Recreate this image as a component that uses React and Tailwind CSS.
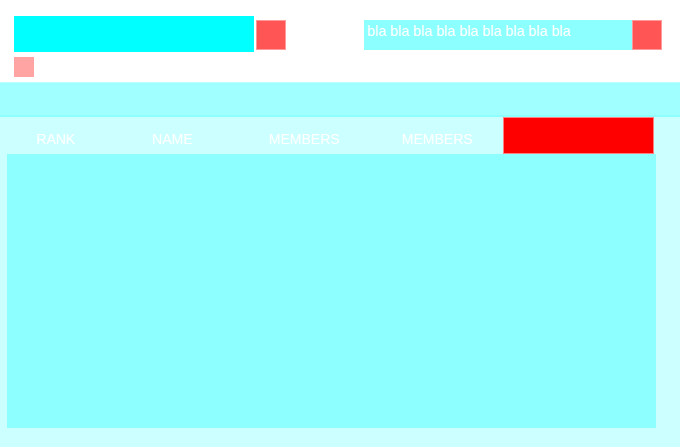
import React from 'react';

export default function App() {
  return (
    <div className="w-[680px] h-[447px] bg-white overflow-hidden" style={{ fontFamily: '"Liberation Sans", Arial, sans-serif' }}>
      {/* Top bar */}
      <div className="h-[82px] flex">
        <div className="pl-[14px] pt-[16px]">
          <div className="flex items-start">
            <div className="w-[240px] h-[36px] bg-[#00ffff]" />
            <div className="ml-[2px] mt-[4px] w-[30px] h-[30px] bg-[#ff5555] border border-[#ff9a9a]" />
          </div>
          <div className="mt-[5px] w-[20px] h-[20px] bg-[#ffa3a3]" />
        </div>
        <div className="ml-auto mr-[18px] mt-[20px] flex items-start">
          <div className="w-[268px] h-[30px] bg-[#8cffff] pl-[3px] pt-[3px] text-[14.3px] leading-[16px] text-white whitespace-nowrap">
            bla bla bla bla bla bla bla bla bla
          </div>
          <div className="w-[30px] h-[30px] bg-[#ff5555] border border-[#ff9a9a]" />
        </div>
      </div>

      {/* Band */}
      <div className="h-[35px] bg-[#a0ffff] border-t border-t-[#b8ffff] border-b-2 border-b-[#8effff]" />

      {/* Table */}
      <div className="bg-[#ccffff] pb-[19px]">
        <div className="flex h-[37px] text-[14px] leading-[16px] text-white">
          <div className="w-[111px] pt-[14px] text-center">RANK</div>
          <div className="w-[122px] pt-[14px] text-center">NAME</div>
          <div className="w-[142px] pt-[14px] text-center">MEMBERS</div>
          <div className="w-[124px] pt-[14px] text-center">MEMBERS</div>
          <div className="ml-[4px] w-[151px] h-[37px] bg-[#ff0000] border border-[#ff8080]" />
        </div>
        <div className="ml-[7px] w-[649px] h-[274px] bg-[#8effff]" />
      </div>
    </div>
  );
}
